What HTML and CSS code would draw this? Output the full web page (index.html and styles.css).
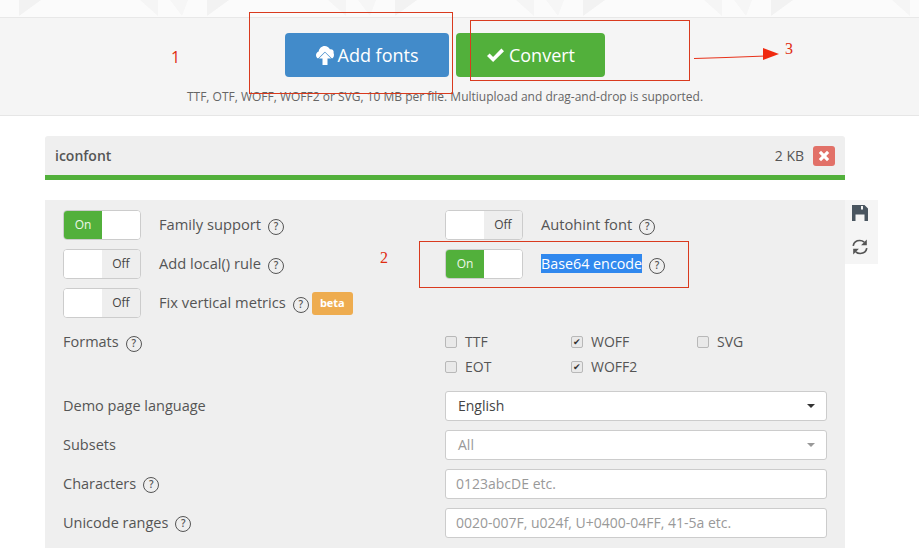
FILE: index.html
```html
<!DOCTYPE html>
<html lang="en">
<head>
    <meta charset="UTF-8">
    <meta name="viewport" content="width=device-width, initial-scale=1.0">
    <title>Webfont generator</title>
    <link rel="stylesheet" href="styles.css">
</head>
<body>
    <!-- top strip -->
    <svg class="strip" width="919" height="17" aria-hidden="true">
        <defs>
            <pattern id="tri" width="188" height="17" patternUnits="userSpaceOnUse">
                <path d="M19 0h22l-22 16z" fill="#f2f2f2"/>
                <path d="M140 0h18v16z" fill="#f5f5f5"/>
                <path d="M170 0h18l-6 16z" fill="#f6f6f6"/>
            </pattern>
        </defs>
        <rect width="919" height="17" fill="#fbfbfb"/>
        <rect width="919" height="17" fill="url(#tri)"/>
    </svg>

    <!-- upload bar -->
    <div class="uploader">
        <div class="uploader-buttons">
            <button class="btn btn-blue" type="button">
                <svg class="btn-icon" width="18" height="19" viewBox="0 0 18 19">
                    <path d="M4 13C1.800 13 0 11.300 0 9.200 0 7.500 1.100 6.100 2.700 5.500 3.100 2.400 5.600 0 8.700 0c2.300 0 4.300 1.300 5.200 3.300 .3-.1 .7-.1 1-.1 1.600 0 2.800 1.300 2.800 2.800 0 .4-.1 .8-.2 1.100 .3 .5 .5 1.100 .5 1.800C18 11.300 16.300 13 14 13z" fill="#fff"/>
                    <path d="M9 6.500l-6 6h3.500V19h5v-6.500H15z" fill="#fff" stroke="#428bca" stroke-width="1.200" paint-order="stroke"/>
                </svg>
                Add fonts
            </button>
            <button class="btn btn-green" type="button">
                <svg class="btn-icon" width="19" height="15" viewBox="0 0 19 15">
                    <path d="M1 8l2.600-2.600 3.500 3.500L15.400 .6 18 3.200 7.100 14.100z" fill="#fff"/>
                </svg>
                Convert
            </button>
        </div>
        <p class="uploader-hint">TTF, OTF, WOFF, WOFF2 or SVG, 10 MB per file. Multiupload and drag-and-drop is supported.</p>
    </div>

    <div class="content">
        <!-- font file header -->
        <div class="file-head">
            <span class="file-name">iconfont</span>
            <span class="file-size">2 KB</span>
            <span class="file-remove">
                <svg width="12" height="12" viewBox="0 0 12 12">
                    <path d="M3 .8L6 3.800 9 .8 11.200 3 8.200 6l3 3L9 11.200l-3-3-3 3L.8 9l3-3-3-3z" fill="#fff"/>
                </svg>
            </span>
        </div>

        <div class="options-wrap">
            <div class="options">
                <div class="option-grid">
                    <div class="col">
                        <div class="row">
                            <div class="toggle on"><span class="toggle-state">On</span><span class="toggle-blank"></span></div>
                            <span class="label">Family support</span>
                            <span class="help">?</span>
                        </div>
                        <div class="row">
                            <div class="toggle off"><span class="toggle-blank"></span><span class="toggle-state">Off</span></div>
                            <span class="label">Add local() rule</span>
                            <span class="help">?</span>
                        </div>
                        <div class="row">
                            <div class="toggle off"><span class="toggle-blank"></span><span class="toggle-state">Off</span></div>
                            <span class="label">Fix vertical metrics</span>
                            <span class="help">?</span>
                            <span class="beta">beta</span>
                        </div>
                    </div>
                    <div class="col">
                        <div class="row">
                            <div class="toggle off"><span class="toggle-blank"></span><span class="toggle-state">Off</span></div>
                            <span class="label">Autohint font</span>
                            <span class="help">?</span>
                        </div>
                        <div class="row">
                            <div class="toggle on"><span class="toggle-state">On</span><span class="toggle-blank"></span></div>
                            <span class="label selected">Base64 encode</span>
                            <span class="help">?</span>
                        </div>
                    </div>
                </div>

                <div class="form-line formats-line">
                    <div class="form-label">Formats<span class="help">?</span></div>
                    <div class="formats">
                        <label class="check"><span class="box"></span>TTF</label>
                        <label class="check"><span class="box checked">&#10004;</span>WOFF</label>
                        <label class="check"><span class="box"></span>SVG</label>
                        <label class="check"><span class="box"></span>EOT</label>
                        <label class="check"><span class="box checked">&#10004;</span>WOFF2</label>
                    </div>
                </div>

                <div class="form-line">
                    <div class="form-label">Demo page language</div>
                    <div class="field select">English<span class="caret"></span></div>
                </div>
                <div class="form-line">
                    <div class="form-label">Subsets</div>
                    <div class="field select disabled">All<span class="caret"></span></div>
                </div>
                <div class="form-line">
                    <div class="form-label">Characters<span class="help">?</span></div>
                    <div class="field placeholder">0123abcDE etc.</div>
                </div>
                <div class="form-line">
                    <div class="form-label">Unicode ranges<span class="help">?</span></div>
                    <div class="field placeholder">0020-007F, u024f, U+0400-04FF, 41-5a etc.</div>
                </div>
            </div>

            <!-- save / reset -->
            <div class="side-tools">
                <svg width="18" height="18" viewBox="0 0 18 18">
                    <path d="M1 1h12.500L17 4.500V17H1zM10 2v3.500h2V2zM4.500 10.500V17h9v-6.500z" fill="#4a5660" fill-rule="evenodd"/>
                </svg>
                <svg width="18" height="18" viewBox="0 0 18 18">
                    <path d="M2.200 7.800C2.800 4.600 5.600 2.500 8.800 2.500c1.700 0 3.200 .6 4.400 1.700" fill="none" stroke="#555" stroke-width="1.700"/>
                    <path d="M15.800 1.500v5.700h-5.700z" fill="#555"/>
                    <path d="M15.800 10.200c-.6 3.200-3.400 5.300-6.600 5.300-1.700 0-3.200-.6-4.400-1.700" fill="none" stroke="#555" stroke-width="1.700"/>
                    <path d="M2.200 16.500v-5.700h5.700z" fill="#555"/>
                </svg>
            </div>
        </div>
    </div>

    <!-- red notes drawn on top of the screenshot -->
    <div class="note-box note-box-1"></div>
    <div class="note-box note-box-2"></div>
    <div class="note-box note-box-3"></div>
    <span class="note-num note-num-1">1</span>
    <span class="note-num note-num-2">2</span>
    <span class="note-num note-num-3">3</span>
    <svg class="note-arrow" width="90" height="20" viewBox="0 0 90 20" aria-hidden="true">
        <path d="M1 13.500l32-1 40-1.500" stroke="#e8321a" stroke-width="1" fill="none"/>
        <path d="M70 3l16 6-16 6z" fill="#f02a10"/>
    </svg>
</body>
</html>
```

FILE: styles.css
```css
:root {
    --green: #52b03b;
    --blue: #428bca;
    --text-color: #555555;
    --panel-background: #efefef;
    --input-border: #cccccc;
    --note-color: #d93a1e;
}
body {
    font-family: "Open Sans", "Noto Sans", sans-serif;
    background-color: #ffffff;
    color: var(--text-color);
    margin: 0;
    height: 556px;
    overflow: hidden;
}
.strip {
    display: block;
}
.uploader {
    height: 99px;
    box-sizing: border-box;
    padding: 15px 29px 0 0;
    background-color: #f5f5f5;
    border-top: 1px solid #e8e8e8;
    border-bottom: 1px solid #e6e6e6;
    text-align: center;
}
.uploader-buttons {
    display: flex;
    justify-content: center;
    gap: 7px;
}
.btn {
    display: flex;
    align-items: center;
    justify-content: center;
    gap: 4px;
    height: 44px;
    border: none;
    border-radius: 4px;
    padding: 0;
    font-family: inherit;
    font-size: 18px;
    color: #ffffff;
}
.btn-blue {
    width: 164px;
    background-color: var(--blue);
}
.btn-green {
    width: 149px;
    background-color: var(--green);
}
.uploader-hint {
    margin: 12px 0 0;
    font-size: 12px;
    line-height: 16px;
    color: #666666;
}
.content {
    width: 800px;
    margin: 20px 0 0 45px;
}
.file-head {
    display: flex;
    align-items: center;
    height: 44px;
    box-sizing: border-box;
    padding: 0 10px;
    background-color: var(--panel-background);
    border-bottom: 5px solid var(--green);
    border-radius: 3px 3px 0 0;
}
.file-name {
    flex: 1;
    font-size: 14px;
    font-weight: 600;
}
.file-size {
    font-size: 14px;
    margin-right: 9px;
}
.file-remove {
    display: flex;
    align-items: center;
    justify-content: center;
    width: 22px;
    height: 20px;
    background-color: #e27168;
    border-radius: 3px;
}
.options-wrap {
    position: relative;
    margin-top: 20px;
}
.options {
    padding: 10px 18px;
    height: 328px;
    background-color: var(--panel-background);
}
.option-grid {
    display: grid;
    grid-template-columns: 382px 382px;
    height: 122px;
}
.col {
    display: flex;
    flex-direction: column;
    gap: 9px;
}
.row {
    display: flex;
    align-items: center;
    height: 30px;
}
.toggle {
    display: flex;
    width: 78px;
    height: 30px;
    box-sizing: border-box;
    border: 1px solid var(--input-border);
    border-radius: 4px;
    overflow: hidden;
    margin-right: 18px;
    font-size: 12px;
    background-color: #ffffff;
}
.toggle-blank {
    width: 38px;
    background-color: #ffffff;
}
.toggle-state {
    width: 38px;
    line-height: 27px;
    text-align: center;
    color: #444444;
    background-color: #eeeeee;
}
.toggle.on .toggle-state {
    background-color: var(--green);
    color: #eef7ea;
}
.label {
    margin-bottom: 2px;
    font-size: 14.700px;
    font-weight: 500;
    line-height: 19px;
}
.selected {
    font-size: 14.300px;
    background-color: #3088ee;
    color: #ffffff;
}
.help {
    display: inline-block;
    box-sizing: border-box;
    width: 16px;
    height: 16px;
    margin-left: 7px;
    border: 1.500px solid #555555;
    border-radius: 50%;
    font-size: 10px;
    line-height: 13px;
    text-align: center;
    font-weight: 600;
    position: relative;
    top: 2px;
}
.beta {
    margin-left: 3px;
    padding: 0 8px;
    height: 23px;
    line-height: 22px;
    font-size: 11px;
    font-weight: 700;
    color: #ffffff;
    background-color: #eeac4f;
    border-radius: 3px;
}
.form-line {
    display: grid;
    grid-template-columns: 382px 382px;
    align-items: center;
    height: 30px;
    margin-bottom: 9px;
}
.form-label {
    display: flex;
    align-items: center;
    padding-bottom: 2px;
    font-size: 14.500px;
    line-height: 19px;
}
.formats-line {
    align-items: start;
    height: 59px;
    margin-bottom: 0;
}
.formats {
    display: grid;
    grid-template-columns: 126px 126px 126px;
    grid-auto-rows: 25px;
}
.check {
    display: flex;
    align-items: center;
    font-size: 14px;
    height: 19px;
}
.box {
    display: inline-block;
    width: 10px;
    height: 10px;
    margin-right: 8px;
    border: 1px solid #b8b8b8;
    border-radius: 2px;
    background-color: #e9e9e9;
    font-size: 9px;
    line-height: 10px;
    text-align: center;
    color: #333333;
}
.field {
    position: relative;
    height: 30px;
    box-sizing: border-box;
    padding: 0 12px;
    border: 1px solid var(--input-border);
    border-radius: 3px;
    background-color: #ffffff;
    font-size: 14px;
    line-height: 28px;
}
.select {
    color: #444444;
}
.disabled {
    color: #999999;
}
.placeholder {
    padding: 0 10px;
    color: #999999;
}
.caret {
    position: absolute;
    right: 11px;
    top: 12px;
    border-top: 4px solid #333333;
    border-left: 4px solid transparent;
    border-right: 4px solid transparent;
}
.disabled .caret {
    border-top-color: #999999;
}
.side-tools {
    position: absolute;
    left: 800px;
    top: 0;
    width: 33px;
    height: 64px;
    box-sizing: border-box;
    padding: 4px 3px 0 0;
    display: flex;
    flex-direction: column;
    align-items: center;
    gap: 16px;
    background-color: #f5f5f5;
}
.note-box {
    position: absolute;
    box-sizing: border-box;
    border: 1px solid var(--note-color);
}
.note-box-1 {
    left: 249px;
    top: 12px;
    width: 204px;
    height: 82px;
}
.note-box-2 {
    left: 419px;
    top: 241px;
    width: 270px;
    height: 47px;
}
.note-box-3 {
    left: 470px;
    top: 20px;
    width: 220px;
    height: 61px;
}
.note-num {
    position: absolute;
    font-family: "Liberation Serif", serif;
    font-size: 16px;
    line-height: 18px;
    color: #e02c10;
}
.note-num-1 {
    left: 171px;
    top: 48px;
    font-family: "Open Sans", sans-serif;
}
.note-num-2 {
    left: 380px;
    top: 249px;
}
.note-num-3 {
    left: 785px;
    top: 40px;
}
.note-arrow {
    position: absolute;
    left: 693px;
    top: 45px;
}
```
